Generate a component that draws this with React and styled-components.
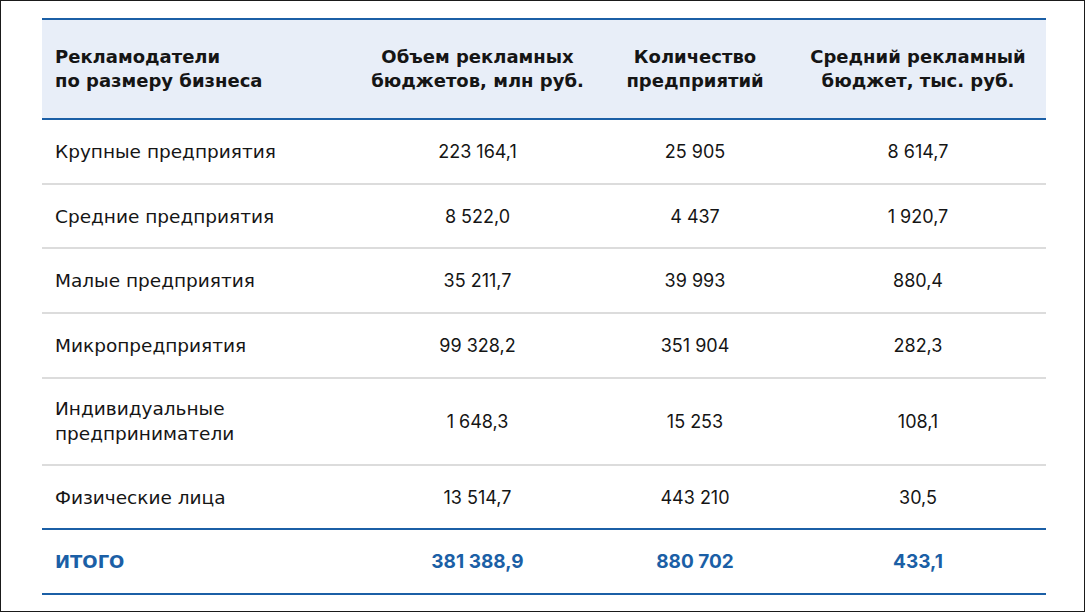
import React from "react";
import styled, { createGlobalStyle } from "styled-components";

const Global = createGlobalStyle`
  html, body { margin: 0; padding: 0; background: #fff; }
  body { font-family: "DejaVu Sans", "Inter", sans-serif; color: #151515; }
`;

const Frame = styled.div`
  box-sizing: border-box;
  width: 1085px;
  height: 612px;
  border: 1px solid #1a1a1a;
  padding: 17px 0 0 41px;
`;

const Table = styled.table`
  width: 1004px;
  border-collapse: separate;
  border-spacing: 0;
  table-layout: fixed;
`;

const HeadRow = styled.tr`
  background: #e8eef8;
`;

const Th = styled.th`
  box-sizing: border-box;
  height: 102px;
  padding: 0 0 0 ${(p) => (p.$left ? "13px" : "0")};
  text-align: ${(p) => (p.$left ? "left" : "center")};
  font-family: "DejaVu Sans", sans-serif;
  font-size: 18px;
  font-weight: 700;
  line-height: 24px;
  color: #151515;
  border-top: 2px solid #1b5fa6;
  border-bottom: 2px solid #1b5fa6;
  vertical-align: middle;
`;

const cellSize = (p) => {
  if (p.$left) return p.$total ? "18px" : "18.5px";
  return p.$total ? "19px" : "18px";
};

const Td = styled.td`
  box-sizing: border-box;
  height: ${(p) => (p.$tall ? "87px" : "64.7px")};
  padding: 0 0 0 ${(p) => (p.$left ? "13px" : "0")};
  text-align: ${(p) => (p.$left ? "left" : "center")};
  font-family: ${(p) => (p.$left ? '"DejaVu Sans", sans-serif' : '"Inter", sans-serif')};
  font-size: ${cellSize};
  line-height: 25px;
  border-bottom: 2px solid ${(p) => (p.$strong ? "#1b5fa6" : "#dcdcdc")};
  font-weight: ${(p) => (p.$total ? 700 : 400)};
  color: ${(p) => (p.$total ? "#1b5fa6" : "#151515")};
  vertical-align: middle;
`;

const rows = [
  ["Крупные предприятия", "223 164,1", "25 905", "8 614,7"],
  ["Средние предприятия", "8 522,0", "4 437", "1 920,7"],
  ["Малые предприятия", "35 211,7", "39 993", "880,4"],
  ["Микропредприятия", "99 328,2", "351 904", "282,3"],
  ["Индивидуальные\nпредприниматели", "1 648,3", "15 253", "108,1"],
  ["Физические лица", "13 514,7", "443 210", "30,5"],
];

const Lines = ({ text }) =>
  text.split("\n").map((l, i) => (
    <React.Fragment key={i}>
      {i > 0 && <br />}
      {l}
    </React.Fragment>
  ));

export default function App() {
  return (
    <>
      <Global />
      <Frame>
        <Table>
          <colgroup>
            <col style={{ width: 313 }} />
            <col style={{ width: 245 }} />
            <col style={{ width: 190 }} />
            <col style={{ width: 256 }} />
          </colgroup>
          <thead>
            <HeadRow>
              <Th $left>
                Рекламодатели
                <br />
                по размеру бизнеса
              </Th>
              <Th>
                Объем рекламных
                <br />
                бюджетов, млн руб.
              </Th>
              <Th>
                Количество
                <br />
                предприятий
              </Th>
              <Th>
                Средний рекламный
                <br />
                бюджет, тыс. руб.
              </Th>
            </HeadRow>
          </thead>
          <tbody>
            {rows.map((r, i) => {
              const tall = r[0].includes("\n");
              const strong = i === rows.length - 1;
              return (
                <tr key={i}>
                  {r.map((c, j) => (
                    <Td key={j} $left={j === 0} $tall={tall} $strong={strong}>
                      <Lines text={c} />
                    </Td>
                  ))}
                </tr>
              );
            })}
            <tr>
              {["ИТОГО", "381 388,9", "880 702", "433,1"].map((c, j) => (
                <Td key={j} $left={j === 0} $total $strong>
                  {c}
                </Td>
              ))}
            </tr>
          </tbody>
        </Table>
      </Frame>
    </>
  );
}
